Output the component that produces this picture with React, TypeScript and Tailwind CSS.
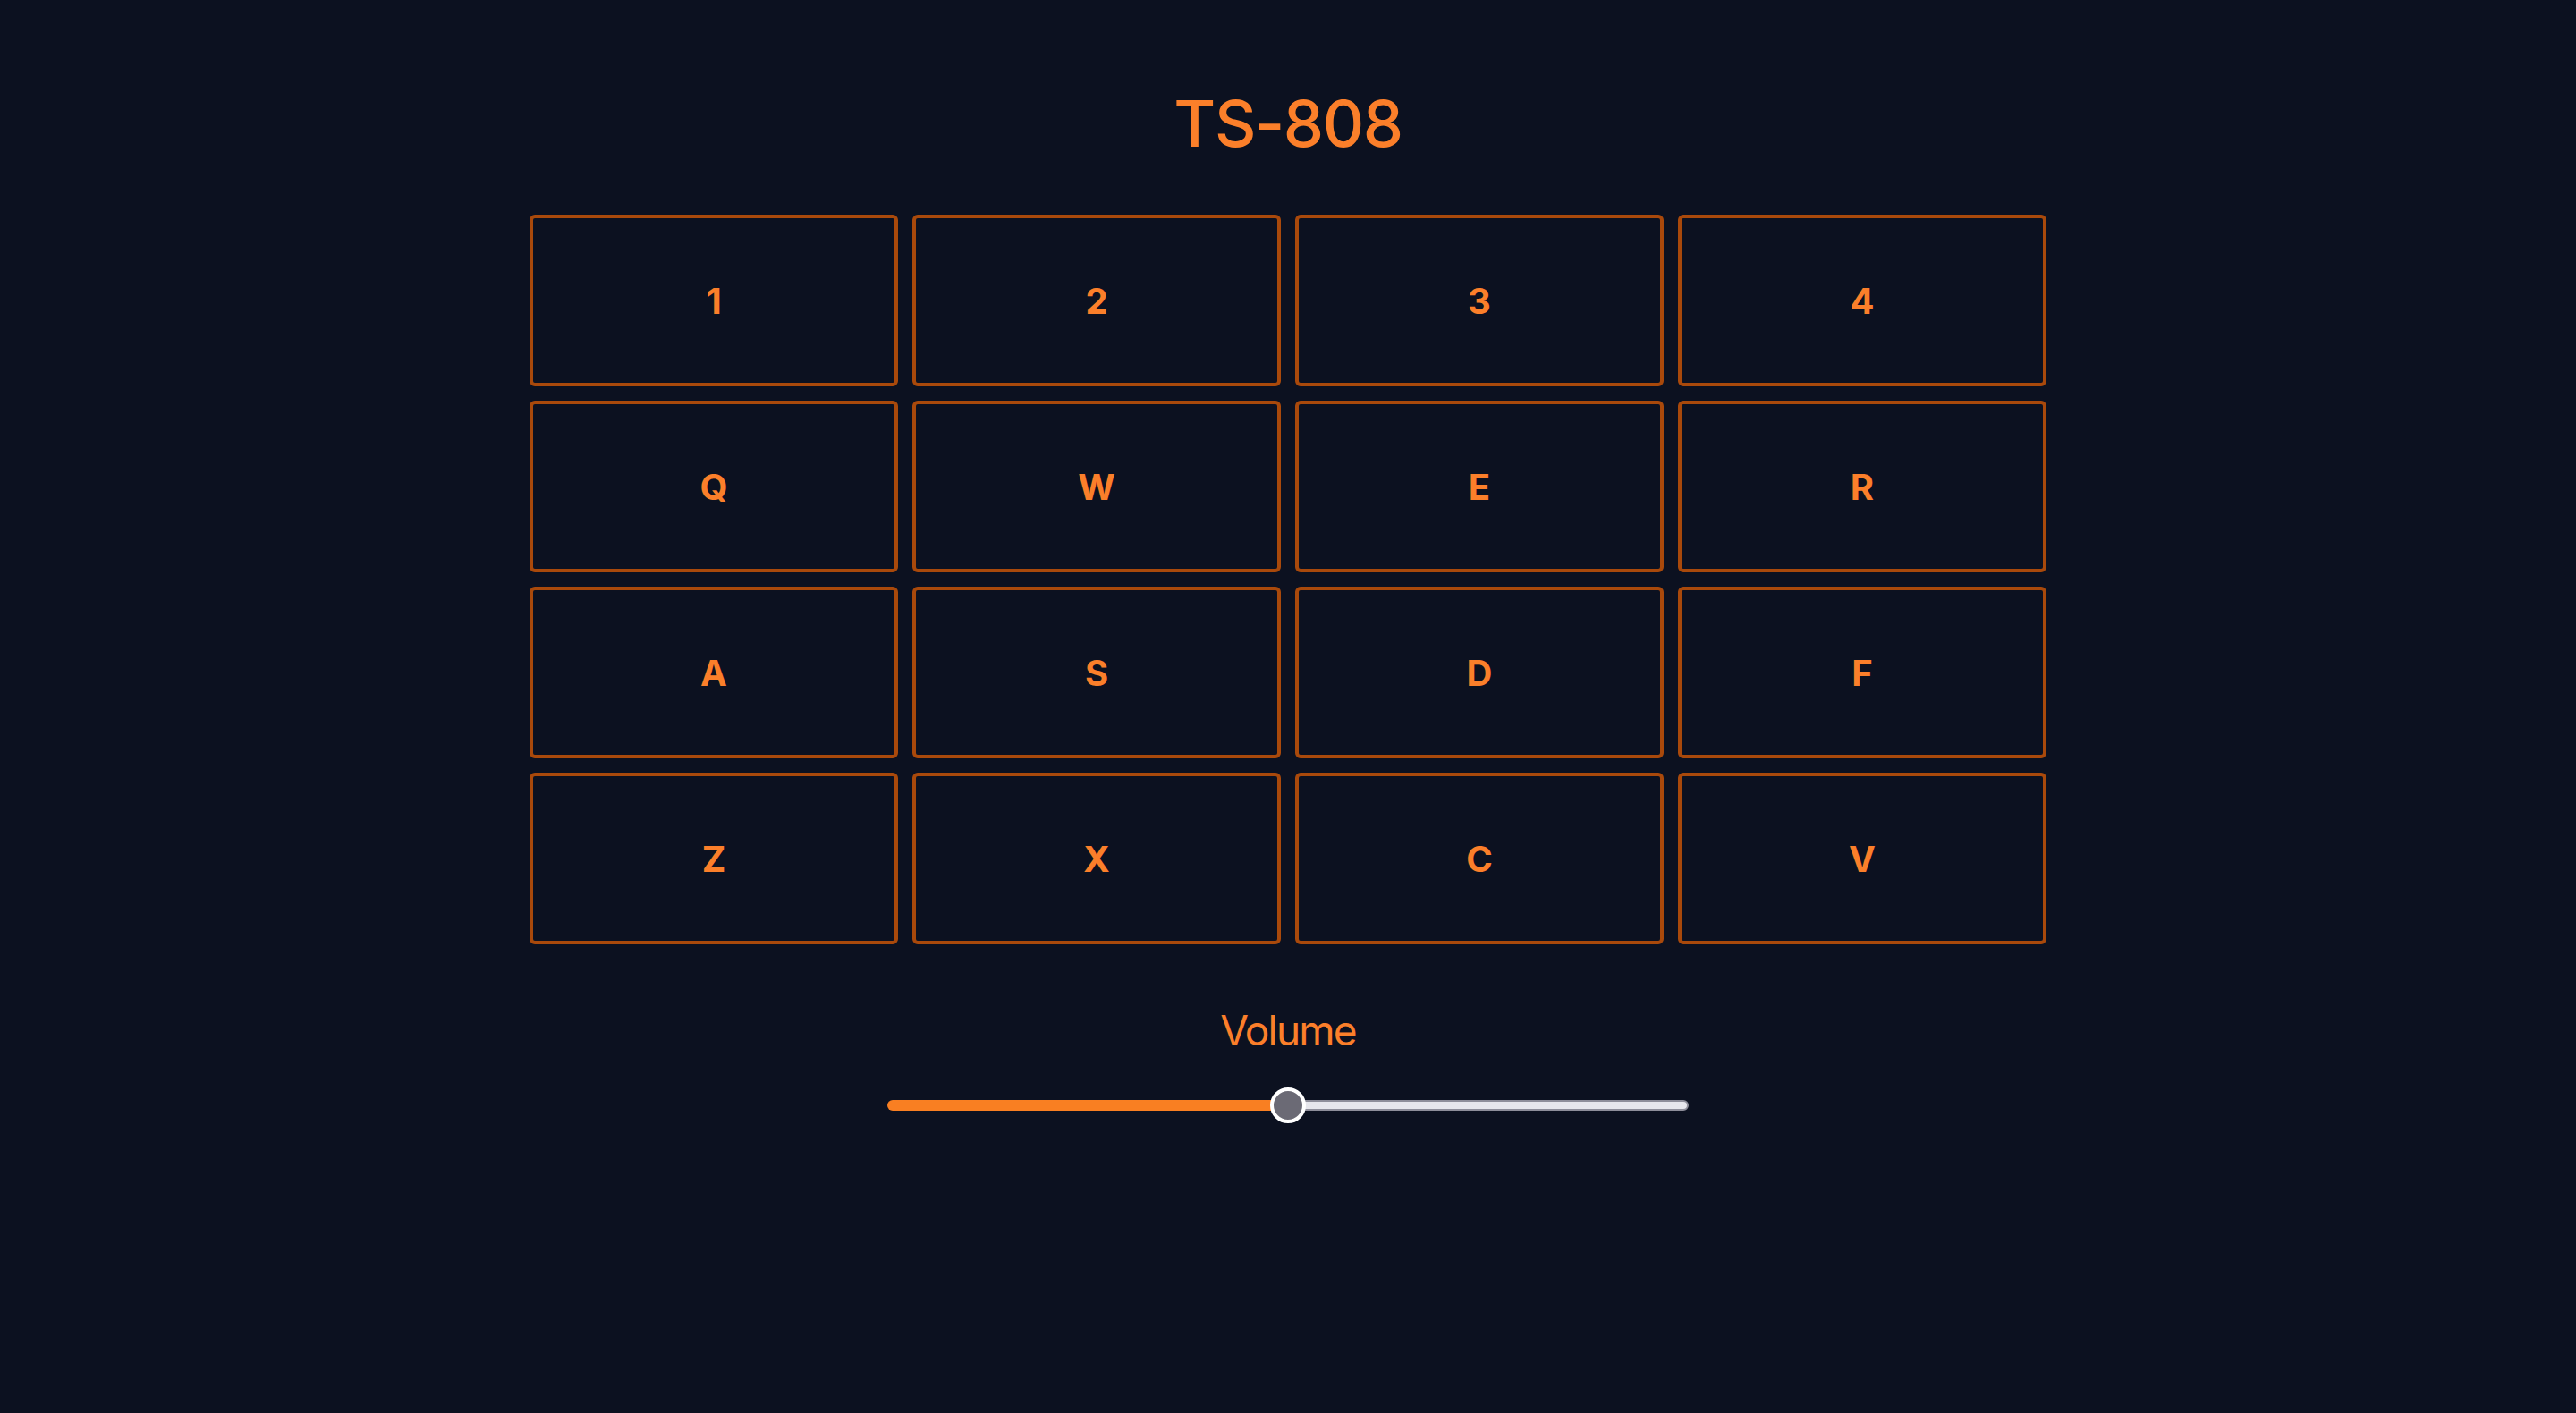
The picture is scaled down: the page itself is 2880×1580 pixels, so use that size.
import React, { useState } from "react";

const ROWS = [
  ["1", "2", "3", "4"],
  ["Q", "W", "E", "R"],
  ["A", "S", "D", "F"],
  ["Z", "X", "C", "V"],
];

function Pad({ label }: { label: string }) {
  return (
    <button className="flex h-[192px] w-[412px] items-center justify-center rounded-[6px] border-4 border-[#a9490b] bg-transparent pt-[2px] text-[40px] font-bold text-[#fb7f2a]">
      {label}
    </button>
  );
}

function VolumeSlider({ value }: { value: number }) {
  // track is 896px, thumb sits on the boundary between filled and empty
  const filled = (896 * value) / 100;
  return (
    <div className="flex h-10 w-[896px] items-center">
      <div
        className="h-3 rounded-l-full bg-[#f97f22]"
        style={{ width: filled }}
      />
      <div className="z-10 -mx-5 h-10 w-10 shrink-0 rounded-full border-4 border-white bg-[#6b6a75]" />
      <div className="h-3 flex-1 rounded-r-full border-2 border-[#8e8e9a] bg-[#e6e6ec]" />
    </div>
  );
}

export default function App() {
  const [volume] = useState(50);

  return (
    <div
      className="flex min-h-[1580px] w-full flex-col items-center bg-[#0c1120] pt-[98px]"
      style={{ fontFamily: "Inter, 'Liberation Sans', sans-serif" }}
    >
      <h1 className="text-[72px] leading-[80px] font-medium tracking-[-0.02em] text-[#fb7f2a]">
        TS-808
      </h1>

      <div className="mt-[62px] flex flex-col gap-4">
        {ROWS.map((row, i) => (
          <div key={i} className="flex gap-4">
            {row.map((k) => (
              <Pad key={k} label={k} />
            ))}
          </div>
        ))}
      </div>

      <div className="mt-16 flex flex-col items-center gap-8">
        <span className="text-[46px] leading-[64px] tracking-[-0.04em] text-[#fb7f2a]">
          Volume
        </span>
        <VolumeSlider value={volume} />
      </div>
    </div>
  );
}
